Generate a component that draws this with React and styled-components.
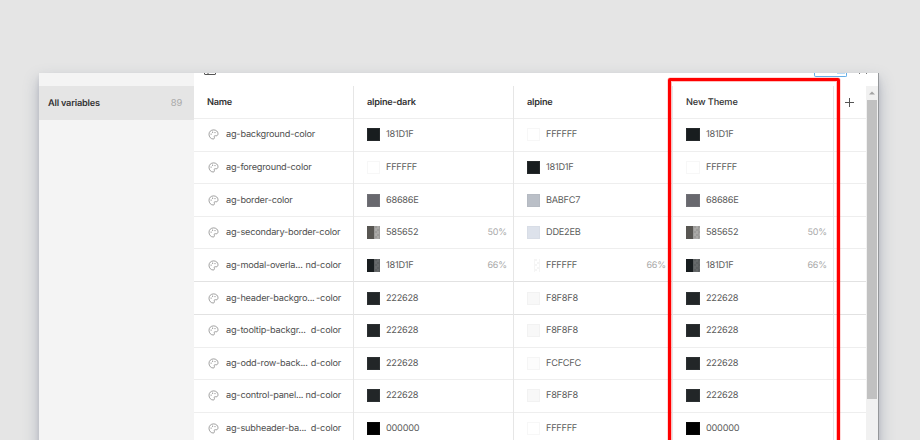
import React from "react";
import styled, { createGlobalStyle } from "styled-components";

const GlobalStyle = createGlobalStyle`
  * { box-sizing: border-box; }
  body {
    margin: 0;
    background: #e5e5e5;
    font-family: Inter, "Liberation Sans", sans-serif;
    font-size: 9.3px;
    color: #555;
    overflow: hidden;
    text-rendering: geometricPrecision;
  }
`;

const Page = styled.main`
  height: 440px;
  padding: 73px 41px 0 39px;
  overflow: hidden;
  background: #e5e5e5;
`;

const Window = styled.section`
  position: relative;
  display: flex;
  width: 840px;
  height: 400px;
  background: #fff;
  border-right: 1px solid #95979a;
  box-shadow: 0 7px 14px rgba(80, 92, 120, 0.38), 0 3px 4px rgba(80, 92, 120, 0.12);
`;

const Sidebar = styled.aside`
  width: 155px;
  padding-top: 13px;
  background: #f4f4f4;
`;

const SidebarItem = styled.div`
  display: flex;
  justify-content: space-between;
  align-items: center;
  height: 34px;
  padding: 0 12px 0 9px;
  background: #e5e5e5;
  color: #333;
  font-size: 9.2px;
  font-weight: 600;
  letter-spacing: -0.2px;
`;

const Count = styled.span`
  color: #aaa;
  font-size: 9.4px;
  font-weight: 400;
`;

const Main = styled.div`
  display: flex;
  flex-direction: column;
  width: 684px;
`;

const Toolbar = styled.div`
  display: flex;
  height: 13px;
  padding: 0 10px;
  align-items: flex-start;
`;

const ActionButton = styled.div`
  width: 33px;
  height: 4px;
  margin: 0 11px 0 auto;
  padding-left: 22px;
  border: 1px solid #64aee8;
  border-top: 0;
  border-radius: 0 0 2px 2px;
`;

const ActionMark = styled.div`
  width: 8px;
  height: 1px;
  background: #bcdcf6;
`;

const Content = styled.div`
  display: flex;
  flex: 1;
`;

const Table = styled.div`
  width: 672px;
`;

const Row = styled.div`
  display: grid;
  grid-template-columns: 160px 160px 159px 161px 32px;
  height: ${(p) => p.$height}px;
  border-bottom: 1px solid ${(p) => (p.$strong ? "#e2e2e2" : "#eeeeee")};
`;

const Cell = styled.div`
  display: flex;
  align-items: center;
  padding: 0 6px 0 13px;
  padding-bottom: ${(p) => (p.$lift ? 2 : 1)}px;
  border-right: 1px solid #e6e6e6;
  margin-bottom: -1px;
  white-space: nowrap;
`;

const ActionCell = styled.div`
  display: flex;
  align-items: center;
  padding-left: 11px;
`;

const Heading = styled.span`
  color: #333;
  font-size: 9.2px;
  font-weight: ${(p) => (p.$medium ? 500 : 600)};
  letter-spacing: ${(p) => (p.$medium ? -0.12 : -0.22)}px;
`;

const NameIcon = styled.svg`
  flex: none;
  width: 11px;
  height: 11px;
  margin: 0 7px 0 1px;
`;

const Name = styled.span`
  display: flex;
  flex: none;
  justify-content: space-between;
  width: ${(p) => (p.$split ? "115px" : "auto")};
  color: #505050;
  font-size: 9.2px;
  letter-spacing: -0.21px;
`;

const Swatch = styled.span`
  flex: none;
  width: ${(p) => (p.$wide ? 14 : 13)}px;
  height: 13px;
  margin-right: 6px;
  background: ${(p) => p.$color};
  box-shadow: inset 0 0 0 1px ${(p) => p.$edge};
`;

const AlphaSwatch = styled(Swatch)`
  background:
    linear-gradient(90deg, ${(p) => p.$color} 50%, ${(p) => p.$fade} 50%),
    repeating-conic-gradient(#e2e2e2 0 25%, #fff 0 50%) 0 0 / 5px 5px;
  box-shadow: none;
`;

const Hex = styled.span`
  color: #5c5c5c;
  font-size: 9.2px;
  letter-spacing: -0.25px;
`;

const Percent = styled.span`
  margin-left: auto;
  color: #aaa;
  font-size: 9px;
  letter-spacing: -0.15px;
`;

const Scrollbar = styled.div`
  width: 12px;
  background: #f1f1f1;
`;

const ScrollArrow = styled.svg`
  display: block;
  width: 12px;
  height: 14px;
`;

const ScrollThumb = styled.div`
  height: 299px;
  margin: 0 1px;
  background: #c1c1c1;
`;

const Highlight = styled.div`
  position: absolute;
  left: 629px;
  top: 5px;
  width: 172px;
  height: 420px;
  border: 3px solid #ff0000;
  border-radius: 2px;
  box-shadow: 0 0 0 0.5px rgba(255, 0, 0, 0.3), inset 0 0 0 1px rgba(255, 0, 0, 0.25);
`;

const PaletteIcon = () => (
  <NameIcon viewBox="0 0 11 11" fill="none">
    <path
      d="M5.600 .9C2.800 .9 1 2.800 1 5.300C1 8 2.900 10 5.200 10C6.600 10 6.500 8.700 6.300 7.900C6.100 7 6.500 6.500 7.300 6.700C8.800 7.100 10 6.400 10 4.800C10 2.500 8.100 .9 5.600 .9Z"
      stroke="#888"
      strokeWidth=".8"
    />
    <circle cx="3.1" cy="5.1" r=".6" fill="#888" />
    <circle cx="4.6" cy="3.2" r=".6" fill="#888" />
    <circle cx="7" cy="3.6" r=".6" fill="#888" />
  </NameIcon>
);

const PanelIcon = () => (
  <svg width="12" height="3" viewBox="0 0 12 3" fill="none">
    <path d="M.5 0V1Q.5 1.500 1 1.500H11Q11.500 1.500 11.500 1V0M4 0V1.500" stroke="#555" />
  </svg>
);

const CloseIcon = () => (
  <svg width="10" height="2" viewBox="0 0 10 2">
    <path d="M2 0L1 1M8 0L9 1" stroke="#777" />
  </svg>
);

const PlusIcon = () => (
  <svg width="9" height="9" viewBox="0 0 9 9">
    <path d="M0 4.500H9M4.500 0V9" stroke="#555" />
  </svg>
);

const palette = {
  "181D1F": ["#181d1f", "#25292b"],
  FFFFFF: ["#ffffff", "#f7f7f7"],
  "68686E": ["#68686e", "#707076"],
  BABFC7: ["#babfc7", "#b5bac2"],
  "585652": ["#585652", "#585652"],
  DDE2EB: ["#dde2eb", "#d8dde6"],
  F8F8F8: ["#f8f8f8", "#f2f2f2"],
  "222628": ["#222628", "#2d3133"],
  FCFCFC: ["#fcfcfc", "#f5f5f5"],
  "000000": ["#000000", "#080808"],
};

const rows = [
  { name: ["ag-background-color"], dark: "181D1F", light: "FFFFFF", h: 33, lift: true },
  { name: ["ag-foreground-color"], dark: "FFFFFF", light: "181D1F", h: 32 },
  { name: ["ag-border-color"], dark: "68686E", light: "BABFC7", h: 33 },
  { name: ["ag-secondary-border-color"], dark: "585652", light: "DDE2EB", darkAlpha: 50, h: 32 },
  { name: ["ag-modal-overla...", "nd-color"], dark: "181D1F", light: "FFFFFF", darkAlpha: 66, lightAlpha: 66, h: 33, strong: true },
  { name: ["ag-header-backgro...", "-color"], dark: "222628", light: "F8F8F8", h: 33, strong: true },
  { name: ["ag-tooltip-backgr...", "d-color"], dark: "222628", light: "F8F8F8", h: 33, lift: true },
  { name: ["ag-odd-row-back...", "d-color"], dark: "222628", light: "FCFCFC", h: 32 },
  { name: ["ag-control-panel...", "nd-color"], dark: "222628", light: "F8F8F8", h: 33, lift: true },
  { name: ["ag-subheader-ba...", "d-color"], dark: "000000", light: "FFFFFF", h: 33, lift: true },
];

const alphaHex = { 50: "80", 66: "a8" };

function ColorCell({ value, alpha, lift, wide }) {
  const [color, edge] = palette[value];
  return (
    <Cell $lift={lift}>
      {alpha ? (
        <AlphaSwatch $wide={wide} $color={color} $fade={color + alphaHex[alpha]} />
      ) : (
        <Swatch $wide={wide} $color={color} $edge={edge} />
      )}
      <Hex>{value}</Hex>
      {alpha && <Percent>{alpha}%</Percent>}
    </Cell>
  );
}

export default function App() {
  return (
    <Page>
      <GlobalStyle />
      <Window>
        <Sidebar>
          <SidebarItem>
            <span>All variables</span>
            <Count>89</Count>
          </SidebarItem>
        </Sidebar>
        <Main>
          <Toolbar>
            <PanelIcon />
            <ActionButton><ActionMark /></ActionButton>
            <CloseIcon />
          </Toolbar>
          <Content>
            <Table>
              <Row $height={33}>
                {["Name", "alpine-dark", "alpine", "New Theme"].map((title, i) => (
                  <Cell key={title}><Heading $medium={i === 3}>{title}</Heading></Cell>
                ))}
                <ActionCell><PlusIcon /></ActionCell>
              </Row>
              {rows.map((row) => (
                <Row key={row.name[0]} $height={row.h} $strong={row.strong}>
                  <Cell $lift={row.lift}>
                    <PaletteIcon />
                    <Name $split={row.name.length > 1}>
                      {row.name.map((part) => <span key={part}>{part}</span>)}
                    </Name>
                  </Cell>
                  <ColorCell value={row.dark} alpha={row.darkAlpha} lift={row.lift} />
                  <ColorCell value={row.light} alpha={row.lightAlpha} lift={row.lift} />
                  <ColorCell value={row.dark} alpha={row.darkAlpha} lift={row.lift} wide />
                  <ActionCell />
                </Row>
              ))}
            </Table>
            <Scrollbar>
              <ScrollArrow viewBox="0 0 12 14">
                <path d="M3 8.500L6 5.500L9 8.500Z" fill="#a3a3a3" />
              </ScrollArrow>
              <ScrollThumb />
            </Scrollbar>
          </Content>
        </Main>
        <Highlight />
      </Window>
    </Page>
  );
}
